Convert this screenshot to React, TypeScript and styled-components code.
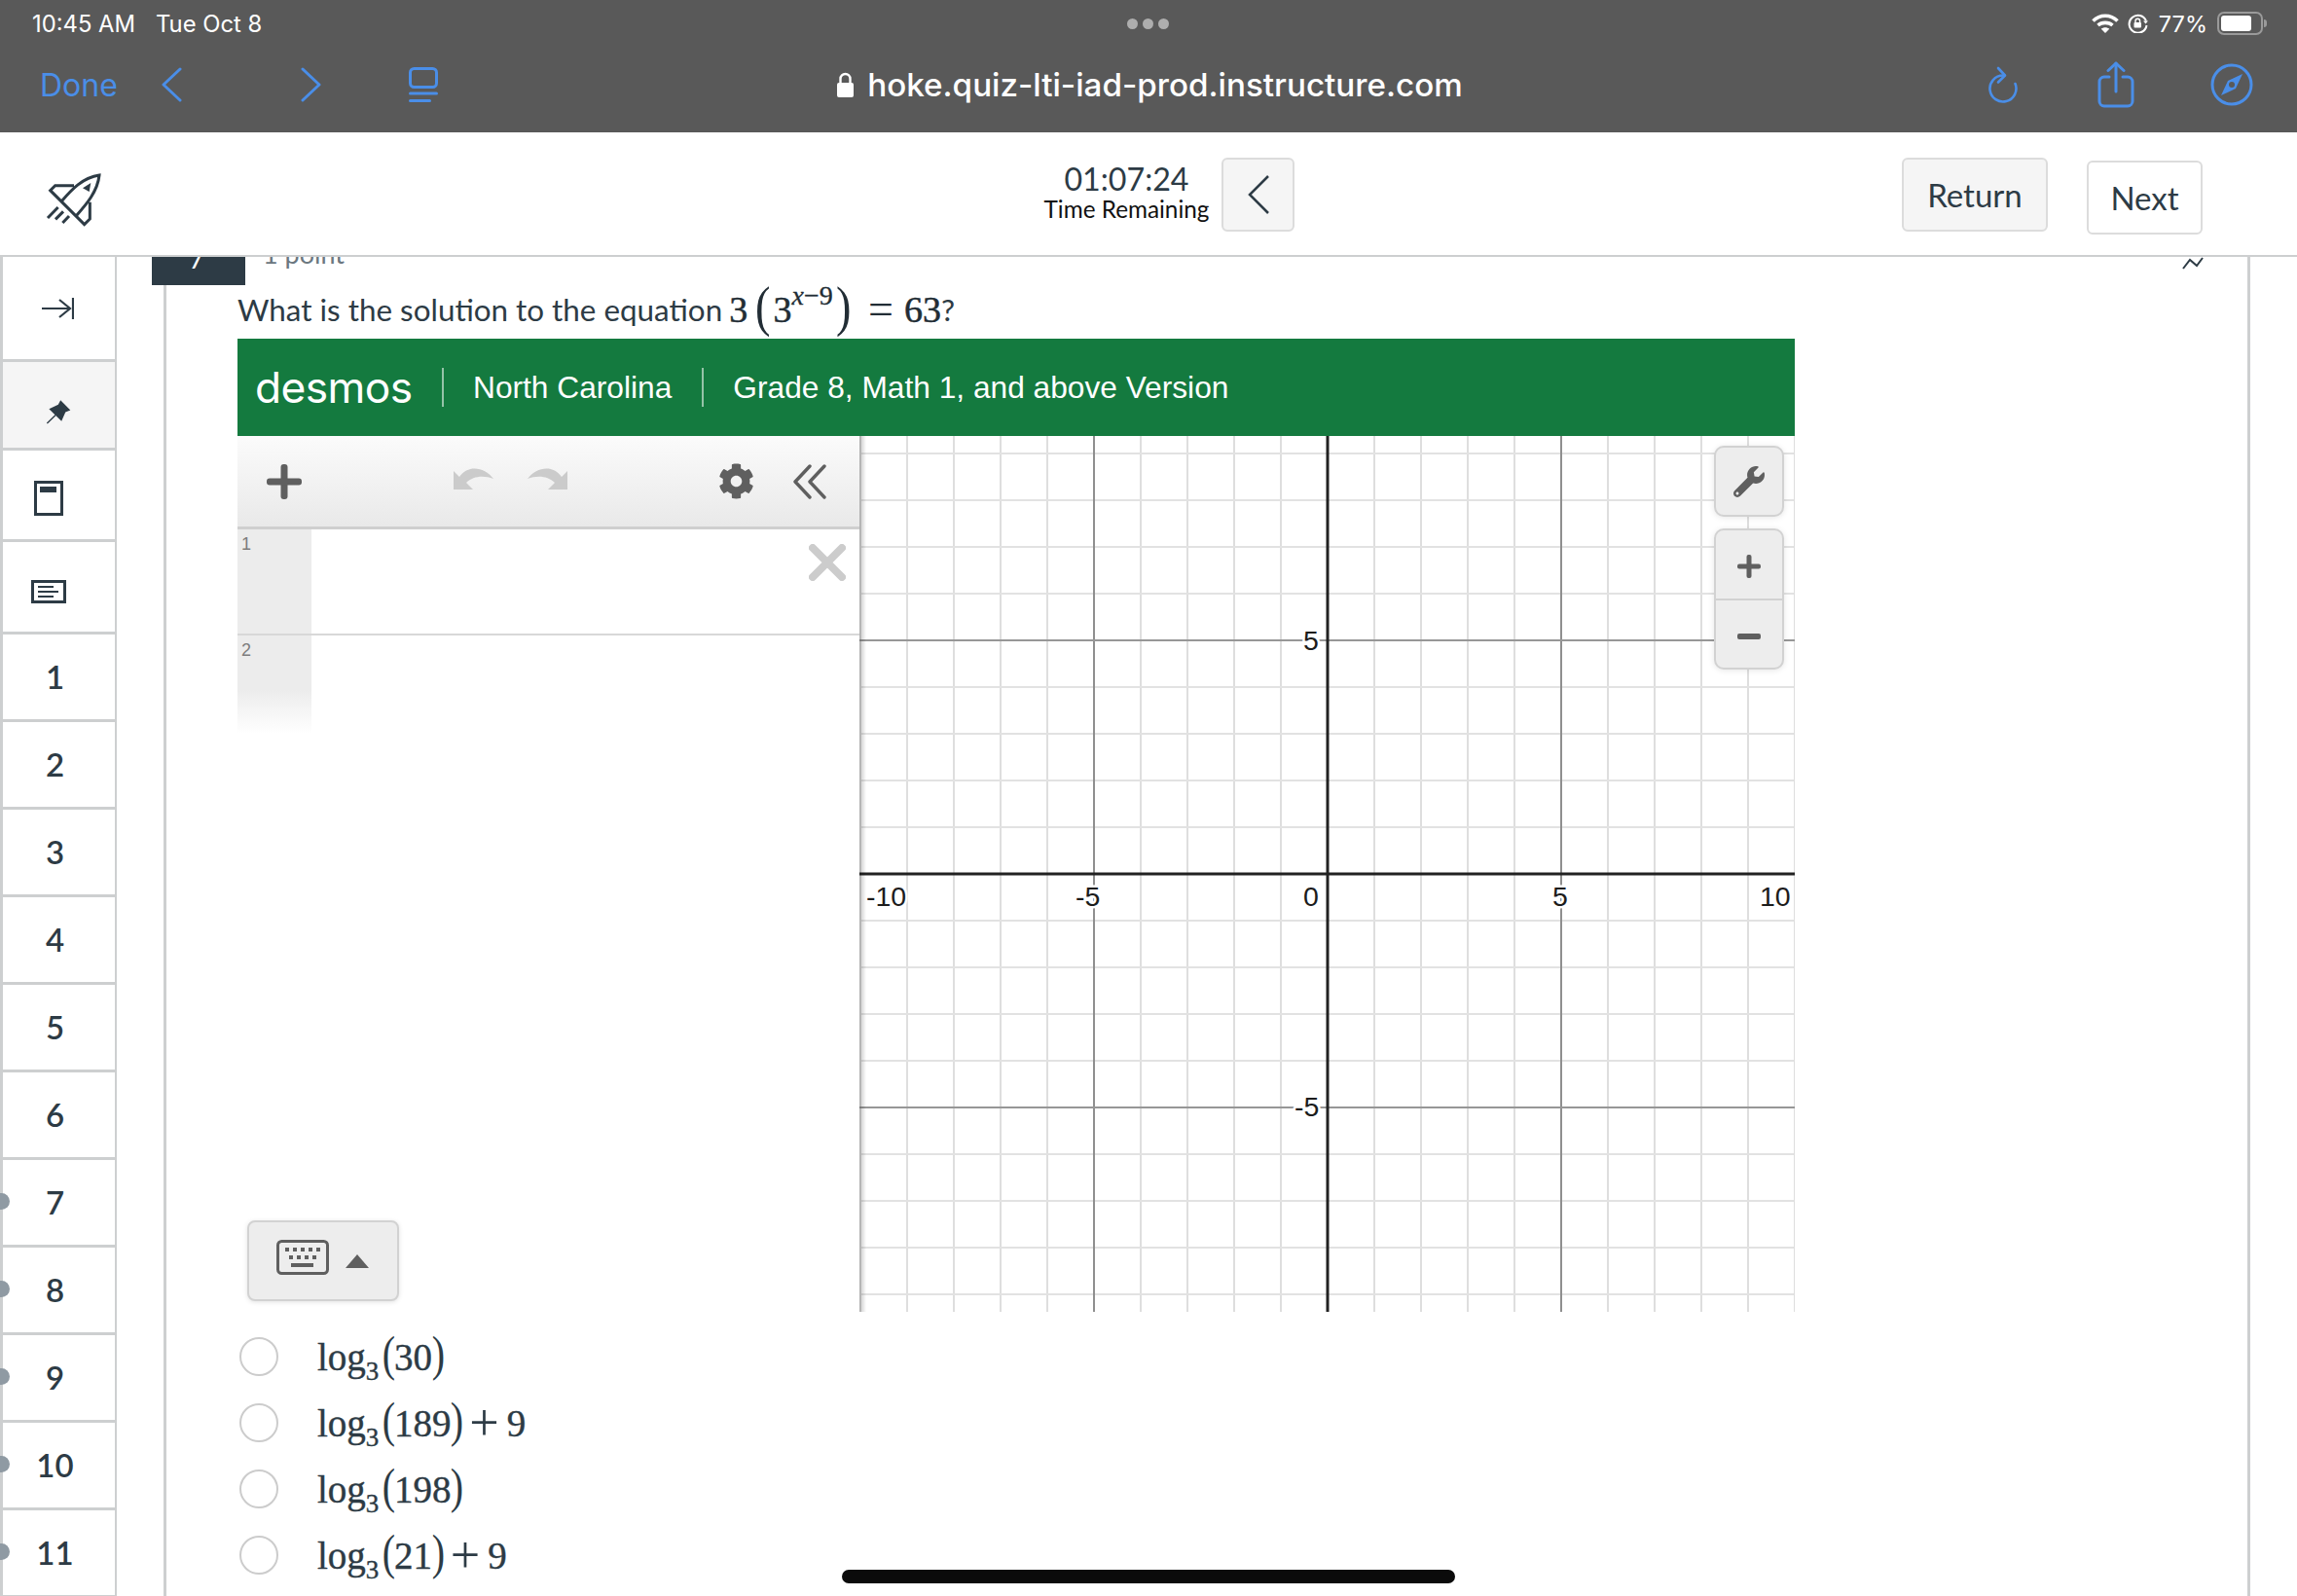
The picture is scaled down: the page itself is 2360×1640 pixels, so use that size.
import React from "react";
import styled, { createGlobalStyle } from "styled-components";
import { FaCog, FaWrench } from "react-icons/fa";

const Global = createGlobalStyle`
  html, body { margin: 0; padding: 0; background: #fff; }
  body { width: 2360px; height: 1640px; overflow: hidden; font-family: "Lato", "Liberation Sans", sans-serif; }
  * { box-sizing: border-box; }
`;

const INK = "#2d3b45";
const BLUE = "#4a8ee8";
const RULE = "#cdcfd0";

const Page = styled.div`
  position: relative;
  width: 2360px;
  height: 1640px;
  overflow: hidden;
  display: flex;
  flex-direction: column;
`;

/* ---------- iOS browser chrome ---------- */
const Chrome = styled.div`
  height: 136px;
  background: #595959;
  flex: none;
  display: flex;
  flex-direction: column;
`;
const StatusRow = styled.div`
  height: 48px;
  display: grid;
  grid-template-columns: 1fr auto 1fr;
  align-items: center;
  padding: 0 35px 0 33px;
  color: #fff;
  font: 400 23.8px "Inter", sans-serif;
`;
const StatusLeft = styled.div`
  display: flex;
  gap: 21px;
`;
const Dots = styled.div`
  display: flex;
  gap: 5px;
`;
const Dot = styled.span`
  width: 11px;
  height: 11px;
  border-radius: 50%;
  background: #aeaeae;
`;
const StatusRight = styled.div`
  display: flex;
  align-items: center;
  justify-content: flex-end;
`;
const Percent = styled.span`
  margin: 0 10px 0 10px;
  font-size: 23.5px;
`;
const Battery = styled.span`
  position: relative;
  width: 47px;
  height: 24px;
  border: 2px solid #9a9a9a;
  border-radius: 7px;
  padding: 2px;
  display: flex;
  &::after {
    content: "";
    position: absolute;
    right: -6px;
    top: 6px;
    width: 3px;
    height: 8px;
    background: #9a9a9a;
    border-radius: 0 3px 3px 0;
  }
`;
const BatteryFill = styled.span`
  width: 31px;
  border-radius: 3px;
  background: #fff;
`;
const NavRow = styled.div`
  height: 78px;
  display: grid;
  grid-template-columns: 1fr auto 1fr;
  align-items: center;
  padding: 0 45px 0 41px;
`;
const NavLeft = styled.div`
  display: flex;
  align-items: center;
`;
const NavRight = styled.div`
  display: flex;
  align-items: center;
  justify-content: flex-end;
`;
const Done = styled.span`
  color: ${BLUE};
  font: 400 32px "Inter", sans-serif;
`;
const NavIcon = styled.svg<{ $ml?: number }>`
  flex: none;
  margin-left: ${(p) => p.$ml ?? 0}px;
  fill: none;
  stroke: ${BLUE};
  stroke-width: 3;
  stroke-linecap: round;
  stroke-linejoin: round;
`;
const Url = styled.div`
  display: flex;
  align-items: center;
  gap: 13px;
  margin-left: 6px;
  color: #fff;
  font: 500 33.2px "Inter", sans-serif;
`;

/* ---------- quiz header ---------- */
const Header = styled.header`
  height: 128px;
  flex: none;
  display: flex;
  align-items: center;
  border-bottom: 2px solid ${RULE};
  padding-right: 97px;
`;
const RocketMark = styled.svg`
  flex: none;
  margin: 12px 0 0 30px;
  fill: none;
  stroke: ${INK};
  stroke-width: 9;
  stroke-linejoin: miter;
`;
const Timer = styled.div`
  margin: -2px 0 0 944px;
  width: 167px;
  text-align: center;
  display: flex;
  flex-direction: column;
  align-items: center;
`;
const Clock = styled.span`
  font-size: 32.2px;
  line-height: 34px;
  color: ${INK};
`;
const ClockLabel = styled.span`
  font-size: 24.3px;
  line-height: 28px;
  color: #111;
  white-space: nowrap;
`;
const HeadButton = styled.div<{ $light?: boolean; $w: number }>`
  width: ${(p) => p.$w}px;
  height: 76px;
  display: flex;
  align-items: center;
  justify-content: center;
  border: 2px solid #dcdcdc;
  border-radius: 6px;
  background: ${(p) => (p.$light ? "#fff" : "#f5f5f5")};
  color: ${INK};
  font-size: 33px;
  margin-top: ${(p) => (p.$light ? 3 : 0)}px;
`;
const CollapseSlot = styled.div`
  margin: 2px 0 0 14px;
`;
const Actions = styled.div`
  margin: 5px 0 0 auto;
  display: flex;
  align-items: flex-start;
  gap: 40px;
`;

/* ---------- body ---------- */
const Body = styled.div`
  flex: 1;
  min-height: 0;
  display: flex;
  overflow: hidden;
`;
const Sidebar = styled.nav`
  width: 120px;
  flex: none;
  border-left: 3px solid ${RULE};
  border-right: 2px solid ${RULE};
  display: flex;
  flex-direction: column;
`;
const SideRow = styled.div<{ $h: number; $active?: boolean; $pad?: string; $flag?: boolean }>`
  position: relative;
  height: ${(p) => p.$h}px;
  flex: none;
  display: flex;
  align-items: center;
  justify-content: center;
  border-bottom: 3px solid ${RULE};
  background: ${(p) => (p.$active ? "#f5f5f5" : "#fff")};
  padding: ${(p) => p.$pad ?? "0 8px 2px 0"};
  color: ${INK};
  font-size: 33px;
  font-weight: 600;
  &::before {
    content: "";
    display: ${(p) => (p.$flag ? "block" : "none")};
    position: absolute;
    left: -10px;
    top: 50%;
    width: 17px;
    height: 17px;
    margin-top: -10px;
    border-radius: 50%;
    background: #8f9aa3;
  }
`;
const SideIcon = styled.svg`
  fill: none;
  stroke: ${INK};
  flex: none;
`;
const Card = styled.main`
  position: relative;
  margin-left: 48px;
  width: 2144px;
  flex: none;
  border-left: 3px solid ${RULE};
  border-right: 3px solid ${RULE};
`;
const TagRow = styled.div`
  height: 29px;
  display: flex;
  margin-left: -15px;
`;
const Tag = styled.div`
  width: 96px;
  height: 29px;
  overflow: hidden;
  background: ${INK};
  color: #fff;
  display: flex;
  align-items: flex-end;
  justify-content: center;
  padding: 0 4px 18px 0;
  font-size: 28px;
  line-height: 20px;
`;
const Points = styled.div`
  margin: -20px 0 0 18px;
  font-size: 27px;
  line-height: 34px;
  color: #6b7780;
`;
const PinFragment = styled.svg`
  position: absolute;
  top: 0;
  left: 2070px;
  fill: none;
  stroke: ${INK};
  stroke-width: 2;
`;
const Content = styled.div`
  margin-left: 73px;
  width: 1600px;
`;
const Question = styled.div`
  height: 55px;
  padding-bottom: 6px;
  display: flex;
  align-items: center;
  white-space: pre;
  font-size: 31.4px;
  color: ${INK};
`;
const MathRun = styled.span`
  display: inline-flex;
  align-items: center;
  margin-left: -1px;
  font-family: "Liberation Serif", serif;
  font-size: 38px;
  color: #222d35;
  -webkit-text-stroke: 0.5px #222d35;
`;
const BigParen = styled.span<{ $first?: boolean }>`
  font-size: 58px;
  line-height: 40px;
  font-weight: 400;
  margin: -6px 1px 0 ${(p) => (p.$first ? 6 : 1)}px;
  display: inline-block;
  transform: scaleX(0.8);
  -webkit-text-stroke: 0;
`;
const Sup = styled.span`
  font-size: 28px;
  align-self: flex-start;
  margin-top: -5px;
  line-height: 26px;
  -webkit-text-stroke: 0.3px #222d35;
`;
const Italic = styled.span`
  font-style: italic;
`;
const Op = styled.span`
  margin: 0 11px 0 15px;
  font-size: 46px;
  line-height: 40px;
  -webkit-text-stroke: 0;
`;

/* ---------- calculator ---------- */
const Calculator = styled.section`
  height: 1000px;
  display: flex;
  flex-direction: column;
`;
const Banner = styled.div`
  height: 100px;
  flex: none;
  background: #147a3f;
  color: #fff;
  display: flex;
  align-items: center;
  padding-left: 18px;
  font: 400 31.7px "Liberation Sans", sans-serif;
`;
const Logo = styled.span`
  font: 400 44.3px "Inter", sans-serif;
  letter-spacing: -0.6px;
  width: 192px;
  line-height: 40px;
  margin-top: -1px;
`;
const BannerRule = styled.span`
  width: 2px;
  height: 40px;
  background: rgba(255, 255, 255, 0.55);
  margin-right: 30px;
`;
const BannerText = styled.span`
  margin-right: 31px;
  white-space: nowrap;
`;
const CalcBody = styled.div`
  flex: 1;
  min-height: 0;
  display: flex;
`;
const Panel = styled.div`
  position: relative;
  z-index: 1;
  width: 639px;
  flex: none;
  background: #fff;
`;
const PanelTools = styled.div`
  height: 96px;
  display: flex;
  align-items: center;
  border-bottom: 3px solid #cfcfcf;
  background: linear-gradient(#fbfbfb, #e9e9e9);
`;
const ToolIcon = styled.svg<{ $ml: number; $muted?: boolean }>`
  flex: none;
  margin-left: ${(p) => p.$ml}px;
  margin-top: ${(p) => (p.$muted ? -6 : 0)}px;
  fill: ${(p) => (p.$muted ? "#cbcbcb" : "#5f5f5f")};
`;
const GearSlot = styled.span`
  margin-left: 155px;
  display: flex;
  color: #5f5f5f;
`;
const ExprRow = styled.div<{ $last?: boolean }>`
  position: relative;
  height: ${(p) => (p.$last ? 101 : 109)}px;
  display: flex;
  border-bottom: ${(p) => (p.$last ? "none" : "2px solid #d8d8d8")};
`;
const Gutter = styled.div<{ $fade?: boolean }>`
  width: 76px;
  flex: none;
  padding: 5px 0 0 4px;
  font: 400 18px "Liberation Sans", sans-serif;
  color: #7d7d7d;
  background: ${(p) => (p.$fade ? "linear-gradient(#ececec 55%, #fff)" : "#ececec")};
`;
const RemoveX = styled.svg`
  position: absolute;
  left: 587px;
  top: 15px;
  stroke: #cccccc;
  stroke-width: 8;
  stroke-linecap: round;
`;
const KeypadToggle = styled.div`
  position: absolute;
  left: 10px;
  top: 806px;
  width: 156px;
  height: 83px;
  border: 2px solid #d2d2d2;
  border-radius: 8px;
  background: #ededed;
  box-shadow: 0 1px 5px rgba(0, 0, 0, 0.12);
  display: flex;
  align-items: flex-start;
  padding: 18px 0 0 28px;
  gap: 17px;
`;
const Graph = styled.div`
  position: relative;
  width: 961px;
  height: 900px;
  flex: none;
  background: #fff;
  &::before {
    content: "";
    position: absolute;
    left: 0;
    top: 0;
    bottom: 0;
    width: 7px;
    background: linear-gradient(to right, rgba(0, 0, 0, 0.22), rgba(0, 0, 0, 0));
  }
`;
const Plot = styled.svg`
  display: block;
`;
const Tick = styled.text`
  font: 400 28.5px "Liberation Sans", sans-serif;
  fill: #1c1c1c;
  stroke: #fff;
  stroke-width: 5px;
  paint-order: stroke;
  stroke-linejoin: round;
`;
const GraphTools = styled.div`
  position: absolute;
  left: 878px;
  top: 10px;
  width: 72px;
  display: flex;
  flex-direction: column;
  gap: 12px;
`;
const GraphButton = styled.div<{ $tall?: boolean }>`
  width: 72px;
  height: ${(p) => (p.$tall ? 145 : 73)}px;
  border: 2px solid #d2d2d2;
  border-radius: 10px;
  background: #ededed;
  box-shadow: 0 1px 6px rgba(0, 0, 0, 0.1);
  color: #5f5f5f;
  display: flex;
  flex-direction: column;
  align-items: center;
  justify-content: center;
`;
const ZoomCell = styled.div<{ $top?: boolean }>`
  flex: 1;
  width: 100%;
  padding-top: 5px;
  display: flex;
  align-items: center;
  justify-content: center;
  border-bottom: ${(p) => (p.$top ? "2px solid #d2d2d2" : "none")};
`;

/* ---------- answers ---------- */
const Answers = styled.div`
  margin-top: 12px;
  display: flex;
  flex-direction: column;
`;
const Answer = styled.label`
  height: 68px;
  display: flex;
  align-items: center;
`;
const Radio = styled.span`
  width: 40px;
  height: 40px;
  flex: none;
  margin: 0 40px 0 2px;
  border: 2px solid #cccccc;
  border-radius: 50%;
  background: #fff;
`;
const LogExpr = styled.span`
  display: inline-flex;
  align-items: center;
  font-family: "Liberation Serif", serif;
  font-size: 39px;
  color: ${INK};
  -webkit-text-stroke: 0.4px ${INK};
`;
const LogSub = styled.span`
  font-size: 27px;
  align-self: flex-end;
  margin: 0 4px 0 0;
  line-height: 30px;
  transform: translateY(7px);
`;
const LogParen = styled.span`
  font-size: 50px;
  line-height: 40px;
  font-weight: 400;
  display: inline-block;
  transform: scaleX(0.8);
  margin: -6px -2.5px 0;
  -webkit-text-stroke: 0;
`;
const LogPlus = styled.span`
  margin: 0 8px 0 7px;
  font-size: 54px;
  line-height: 40px;
  -webkit-text-stroke: 0;
`;
const HomeBar = styled.div`
  position: absolute;
  left: 865px;
  bottom: 13px;
  width: 630px;
  height: 14px;
  border-radius: 7px;
  background: #0b0b0b;
`;

const questionRows = [
  { n: 1 }, { n: 2 }, { n: 3 }, { n: 4 }, { n: 5 }, { n: 6 },
  { n: 7, flag: true }, { n: 8, flag: true }, { n: 9, flag: true }, { n: 10, flag: true }, { n: 11, flag: true },
];

const answers = [
  { base: "(30)", tail: "" },
  { base: "(189)", tail: "9" },
  { base: "(198)", tail: "" },
  { base: "(21)", tail: "9" },
];

const U = 48;
const OX = 481;
const OY = 450;
const W = 961;
const H = 900;

function GridPlot() {
  const xs: number[] = [];
  for (let i = -10; i <= 10; i++) xs.push(i);
  const ys: number[] = [];
  for (let i = -10; i <= 10; i++) if (OY + i * U >= 0 && OY + i * U <= H) ys.push(i);
  return (
    <Plot width={W} height={H} viewBox={`0 0 ${W} ${H}`}>
      {xs.filter((i) => i % 5 !== 0).map((i) => (
        <line key={`v${i}`} x1={OX + i * U} x2={OX + i * U} y1={0} y2={H} stroke="#dedede" strokeWidth={2} />
      ))}
      {ys.filter((i) => i % 5 !== 0).map((i) => (
        <line key={`h${i}`} y1={OY + i * U} y2={OY + i * U} x1={0} x2={W} stroke="#e2e2e2" strokeWidth={2} />
      ))}
      {[-10, -5, 5, 10].map((i) => (
        <line key={`mv${i}`} x1={OX + i * U} x2={OX + i * U} y1={0} y2={H} stroke={Math.abs(i) === 10 ? "#dedede" : "#8f8f8f"} strokeWidth={2} />
      ))}
      {[-5, 5].map((i) => (
        <line key={`mh${i}`} y1={OY + i * U} y2={OY + i * U} x1={0} x2={W} stroke="#979797" strokeWidth={2} />
      ))}
      <line x1={0} x2={W} y1={OY} y2={OY} stroke="#222" strokeWidth={3} />
      <line x1={OX} x2={OX} y1={0} y2={H} stroke="#222" strokeWidth={3} />
      <Tick x={7} y={483}>-10</Tick>
      <Tick x={222} y={483}>-5</Tick>
      <Tick x={456} y={483}>0</Tick>
      <Tick x={712} y={483}>5</Tick>
      <Tick x={925} y={483}>10</Tick>
      <Tick x={456} y={220}>5</Tick>
      <Tick x={447} y={699}>-5</Tick>
    </Plot>
  );
}

export default function App() {
  return (
    <Page>
      <Global />
      <Chrome>
        <StatusRow>
          <StatusLeft>
            <span>10:45 AM</span>
            <span>Tue Oct 8</span>
          </StatusLeft>
          <Dots>
            <Dot />
            <Dot />
            <Dot />
          </Dots>
          <StatusRight>
            <svg width="28" height="20" viewBox="0 0 28 20" fill="none" stroke="#fff" strokeWidth="3.6">
              <path d="M1.5 7.5C8.5 0.5 19.5 0.5 26.5 7.5" />
              <path d="M6.5 12C10.5 8.5 17.5 8.5 21.5 12" />
              <path d="M14 20l-4.2-4.3c2.4-2 6-2 8.4 0z" fill="#fff" stroke="none" />
            </svg>
            <svg width="22" height="20" viewBox="0 0 22 20" fill="none" stroke="#fff" strokeWidth="2" style={{ marginLeft: 9 }}>
              <path d="M19 7.5A9 9 0 1 0 19.5 12" />
              <path d="M16 7.5h5l-2.5 3z" fill="#fff" stroke="none" />
              <rect x="6.5" y="9" width="7.5" height="5.5" rx="1" fill="#fff" stroke="none" />
              <path d="M8 9V7.5a2.3 2.3 0 0 1 4.6 0V9" strokeWidth="1.4" />
            </svg>
            <Percent>77%</Percent>
            <Battery>
              <BatteryFill />
            </Battery>
          </StatusRight>
        </StatusRow>
        <NavRow>
          <NavLeft>
            <Done>Done</Done>
            <NavIcon $ml={45} width="21" height="36" viewBox="0 0 21 36"><path d="M19 2L2 18l17 16" /></NavIcon>
            <NavIcon $ml={122} width="21" height="36" viewBox="0 0 21 36"><path d="M2 2l17 16L2 34" /></NavIcon>
            <NavIcon $ml={90} width="30" height="36" viewBox="0 0 30 36">
              <rect x="1.5" y="1.5" width="27" height="19" rx="4" />
              <path d="M1.5 27h27" />
              <path d="M1.5 34.5h20" />
            </NavIcon>
          </NavLeft>
          <Url>
            <svg width="19" height="26" viewBox="0 0 19 26">
              <path d="M1 13a2 2 0 0 1 2-2h13a2 2 0 0 1 2 2v11a2 2 0 0 1-2 2H3a2 2 0 0 1-2-2z" fill="#fff" />
              <path d="M4.5 11V7a5 5 0 0 1 10 0v4" fill="none" stroke="#fff" strokeWidth="2.4" />
            </svg>
            <span>hoke.quiz-lti-iad-prod.instructure.com</span>
          </Url>
          <NavRight>
            <NavIcon width="30" height="38" viewBox="0 0 30 38" style={{ strokeWidth: 2.6 }}>
              <path d="M27.5 18A13.5 13.5 0 1 1 15 9.5" />
              <path d="M10 2l7 7.5-7 7" />
            </NavIcon>
            <NavIcon $ml={82} width="38" height="48" viewBox="0 0 38 48">
              <path d="M12 16H7a5 5 0 0 0-5 5v20a5 5 0 0 0 5 5h24a5 5 0 0 0 5-5V21a5 5 0 0 0-5-5h-5" />
              <path d="M19 31V2" />
              <path d="M11 9.5L19 2l8 7.5" />
            </NavIcon>
            <NavIcon $ml={78} width="44" height="44" viewBox="0 0 44 44">
              <circle cx="22" cy="22" r="20" />
              <path d="M33 11L18 18 11 33 26 26z" fill={BLUE} stroke="none" />
              <circle cx="22" cy="22" r="3" fill="#595959" stroke="none" />
            </NavIcon>
          </NavRight>
        </NavRow>
      </Chrome>

      <Header>
        <RocketMark width="100" height="80" viewBox="0 0 300 240">
          <path d="M100 125C130 90 165 52 216 45c-5 50-40 90-71 125" />
          <path d="M138 77H80L65 92 170 197l17-17v-52" />
          <path d="M57 177l32-33M81 181l24-24M103 192l20-21" />
          <path d="M165 85l25-16-5 27z" fill={INK} stroke="none" />
        </RocketMark>
        <Timer>
          <Clock>01:07:24</Clock>
          <ClockLabel>Time Remaining</ClockLabel>
        </Timer>
        <CollapseSlot>
          <HeadButton $w={75}>
            <svg width="24" height="42" viewBox="0 0 24 42" fill="none" stroke={INK} strokeWidth="2.5">
              <path d="M22 2L3 21l19 19" />
            </svg>
          </HeadButton>
        </CollapseSlot>
        <Actions>
          <HeadButton $w={150}>Return</HeadButton>
          <HeadButton $w={119} $light>Next</HeadButton>
        </Actions>
      </Header>

      <Body>
        <Sidebar>
          <SideRow $h={108} $pad="0 3px 0 0">
            <SideIcon width="34" height="24" viewBox="0 0 34 24" strokeWidth="2.2">
              <path d="M1 12h29M19 3l11 9-11 9" />
              <path d="M33 1v22" />
            </SideIcon>
          </SideRow>
          <SideRow $h={91} $active $pad="12px 0 0 0">
            <svg width="27" height="27" viewBox="80 325 80 80">
              <path d="M125 332l30 30-15 6-12 27-38-37 28-13z" fill={INK} />
              <path d="M84 402l26-25" stroke={INK} strokeWidth="4" />
            </svg>
          </SideRow>
          <SideRow $h={94} $pad="6px 22px 0 0">
            <SideIcon width="30" height="36" viewBox="0 0 30 36" strokeWidth="3">
              <rect x="1.5" y="1.5" width="27" height="33" />
              <rect x="6" y="6" width="17" height="6" fill={INK} stroke="none" />
            </SideIcon>
          </SideRow>
          <SideRow $h={95} $pad="10px 22px 0 0">
            <SideIcon width="36" height="24" viewBox="0 0 36 24" strokeWidth="3">
              <rect x="1.5" y="1.5" width="33" height="21" />
              <path d="M7 7h16M7 12h21M7 17h16" strokeWidth="2" />
            </SideIcon>
          </SideRow>
          {questionRows.map((r) => (
            <SideRow key={r.n} $h={90} $flag={r.flag}>{r.n}</SideRow>
          ))}
        </Sidebar>

        <Card>
          <PinFragment width="24" height="14" viewBox="0 0 24 14">
            <path d="M2 12L9 3l7 6 6-8" />
          </PinFragment>
          <TagRow>
            <Tag>7</Tag>
            <Points>1 point</Points>
          </TagRow>
          <Content>
            <Question>
              <span>What is the solution to the equation </span>
              <MathRun>
                <span>3</span>
                <BigParen $first>(</BigParen>
                <span>3</span>
                <Sup><Italic>x</Italic>−9</Sup>
                <BigParen>)</BigParen>
                <Op>=</Op>
                <span>63</span>
              </MathRun>
              <span>?</span>
            </Question>
            <Calculator>
              <Banner>
                <Logo>desmos</Logo>
                <BannerRule />
                <BannerText>North Carolina</BannerText>
                <BannerRule />
                <BannerText>Grade 8, Math 1, and above Version</BannerText>
              </Banner>
              <CalcBody>
                <Panel>
                  <PanelTools>
                    <ToolIcon $ml={30} width="36" height="36" viewBox="0 0 36 36">
                      <rect x="14.5" y="0" width="7" height="36" rx="3" />
                      <rect x="0" y="14.5" width="36" height="7" rx="3" />
                    </ToolIcon>
                    <ToolIcon $ml={156} $muted width="42" height="24" viewBox="0 0 42 24">
                      <path d="M0 4v19h20l-7-7c7-7 18-8 28-4C32 0 15-3 6 10z" />
                    </ToolIcon>
                    <ToolIcon $ml={33} $muted width="42" height="24" viewBox="0 0 42 24">
                      <path d="M42 4v19H22l7-7C22 9 11 8 1 12 10 0 27-3 36 10z" />
                    </ToolIcon>
                    <GearSlot><FaCog size={37} /></GearSlot>
                    <ToolIcon $ml={40} width="34" height="36" viewBox="0 0 34 36" style={{ fill: "none", stroke: "#5f5f5f", strokeWidth: 3.4, strokeLinecap: "round", strokeLinejoin: "round" }}>
                      <path d="M17 2L2 18l15 16" />
                      <path d="M32 2L17 18l15 16" />
                    </ToolIcon>
                  </PanelTools>
                  <ExprRow>
                    <Gutter>1</Gutter>
                    <RemoveX width="38" height="38" viewBox="0 0 38 38">
                      <path d="M4 4l30 30M34 4L4 34" />
                    </RemoveX>
                  </ExprRow>
                  <ExprRow $last>
                    <Gutter $fade>2</Gutter>
                  </ExprRow>
                  <KeypadToggle>
                    <svg width="54" height="36" viewBox="0 0 54 36">
                      <rect x="1.5" y="1.5" width="51" height="33" rx="4" fill="none" stroke="#5f5f5f" strokeWidth="3" />
                      {[9, 17, 25, 33, 41].map((x) => (
                        <rect key={x} x={x} y="8" width="4" height="4" fill="#5f5f5f" />
                      ))}
                      {[13, 21, 29, 37].map((x) => (
                        <rect key={x} x={x} y="16" width="4" height="4" fill="#5f5f5f" />
                      ))}
                      <rect x="15" y="24" width="23" height="4" fill="#5f5f5f" />
                    </svg>
                    <svg width="24" height="14" viewBox="0 0 24 14" style={{ marginTop: 15 }}>
                      <path d="M12 0l12 14H0z" fill="#5f5f5f" />
                    </svg>
                  </KeypadToggle>
                </Panel>
                <Graph>
                  <GridPlot />
                  <GraphTools>
                    <GraphButton>
                      <FaWrench size={32} />
                    </GraphButton>
                    <GraphButton $tall>
                      <ZoomCell $top>
                        <svg width="24" height="24" viewBox="0 0 24 24" fill="#5f5f5f">
                          <rect x="9.5" y="0" width="5" height="24" rx="2" />
                          <rect x="0" y="9.5" width="24" height="5" rx="2" />
                        </svg>
                      </ZoomCell>
                      <ZoomCell>
                        <svg width="24" height="6" viewBox="0 0 24 6" fill="#5f5f5f">
                          <rect x="0" y="0" width="24" height="6" rx="2" />
                        </svg>
                      </ZoomCell>
                    </GraphButton>
                  </GraphTools>
                </Graph>
              </CalcBody>
            </Calculator>
            <Answers>
              {answers.map((a) => (
                <Answer key={a.base}>
                  <Radio />
                  <LogExpr>
                    <span>log</span>
                    <LogSub>3</LogSub>
                    <LogParen>(</LogParen>
                    <span>{a.base.slice(1, -1)}</span>
                    <LogParen>)</LogParen>
                    {a.tail && (
                      <>
                        <LogPlus>+</LogPlus>
                        <span>{a.tail}</span>
                      </>
                    )}
                  </LogExpr>
                </Answer>
              ))}
            </Answers>
          </Content>
        </Card>
      </Body>
      <HomeBar />
    </Page>
  );
}
